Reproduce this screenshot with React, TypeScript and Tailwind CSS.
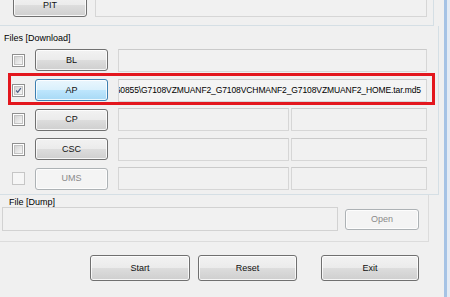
import React from 'react';

const btnBase =
  'flex items-center justify-center rounded-[3px] border shadow-[inset_0_0_0_1px_rgba(255,255,255,0.8)] leading-none';
const btnNormal =
  'border-[#707070] bg-[linear-gradient(to_bottom,#f2f2f2_0%,#ebebeb_50%,#dddddd_50%,#cfcfcf_100%)] text-[#111]';
const btnHot =
  'border-[#3c7fb1] bg-[linear-gradient(to_bottom,#eaf6fd_0%,#d9f0fc_50%,#bee6fd_50%,#a7d9f5_100%)] text-[#111]';
const btnOff = 'border-[#adb2b5] bg-[#f4f4f4] text-[#8a8a8a]';

const fieldCls = 'h-[23px] border border-[#d6d6d6] border-t-[#cacaca] bg-[#f1f1f1]';

const CheckBox = ({ checked, disabled }: { checked?: boolean; disabled?: boolean }) => (
  <div
    className={`ml-[12px] w-[13px] h-[13px] border flex items-center justify-center ${
      disabled ? 'border-[#c6c6c6] bg-[#f6f6f6]' : 'border-[#8f8f8f] bg-white'
    }`}
  >
    {!disabled && (
      <div className="w-[9px] h-[9px] border border-[#c3c3c3] bg-[linear-gradient(to_bottom_right,#d4d4d4,#f6f6f6)] flex items-center justify-center">
        {checked && (
          <svg width="9" height="9" viewBox="0 0 9 9">
            <path d="M1.5 4.5 L3.5 6.8 L7.5 1.5" fill="none" stroke="#4c5f86" strokeWidth="1.6" />
          </svg>
        )}
      </div>
    )}
  </div>
);

type RowProps = {
  label: string;
  h: string;
  checked?: boolean;
  hot?: boolean;
  disabled?: boolean;
  split?: boolean;
  value?: string;
};

const FileRow = ({ label, h, checked, hot, disabled, split, value }: RowProps) => (
  <div className={`flex items-center ${h}`}>
    <CheckBox checked={checked} disabled={disabled} />
    <div className={`${btnBase} ml-[10px] w-[73px] h-[22px] ${hot ? btnHot : disabled ? btnOff : btnNormal}`}>
      {label}
    </div>
    {split ? (
      <>
        <div className={`${fieldCls} ml-[10px] w-[171px]`} />
        <div className={`${fieldCls} ml-[2px] w-[136px]`} />
      </>
    ) : (
      <div
        className={`${fieldCls} ml-[10px] w-[309px] flex items-center justify-end overflow-hidden whitespace-nowrap pr-[5px] text-[8.5px] tracking-[-0.1px] ${
          value ? 'bg-[#f4f4f4] border-[#cfcfcf]' : ''
        }`}
      >
        {value}
      </div>
    )}
  </div>
);

export default function App() {
  return (
    <div className="relative w-[450px] h-[297px] overflow-hidden bg-[#f0f0f0] flex font-['Liberation_Sans',Arial,sans-serif] text-[9px] text-black">
      <div className="w-[444px] flex flex-col">
        {/* top group, mostly scrolled away */}
        <div className="h-[26px] w-[434px] shrink-0 border-r border-b border-[#d5dfe5] flex items-start">
          <div className={`${btnBase} ${btnNormal} -mt-[6px] ml-[13px] w-[74px] h-[23px]`}>PIT</div>
          <div className="-mt-[6px] ml-[8px] w-[332px] h-[23px] border border-[#d6d6d6] bg-[#f1f1f1]" />
        </div>

        {/* Files [Download] */}
        <div className="w-[439px] h-[169px] shrink-0 border-r border-b border-[#d5dfe5] flex flex-col">
          <div className="mt-[5px] pl-[4px] h-[14px] leading-[14px]">Files [Download]</div>
          <FileRow label="BL" h="h-[30px]" />
          <FileRow
            label="AP"
            h="h-[30px]"
            checked
            hot
            value="60855\G7108VZMUANF2_G7108VCHMANF2_G7108VZMUANF2_HOME.tar.md5"
          />
          <FileRow label="CP" h="h-[29px]" split />
          <FileRow label="CSC" h="h-[30px]" split />
          <FileRow label="UMS" h="h-[29px]" split disabled />
        </div>

        {/* File [Dump] */}
        <div className="w-[429px] h-[47px] shrink-0 border-r border-b border-[#dcdcdc] flex flex-col">
          <div className="pl-[9px] h-[12px] leading-[14px]">File [Dump]</div>
          <div className="flex items-center h-[24px]">
            <div className="ml-[2px] w-[336px] h-[24px] border border-[#d2d2d2] bg-[#f1f1f1]" />
            <div className={`${btnBase} ${btnOff} ml-[7px] w-[74px] h-[21px]`}>Open</div>
          </div>
        </div>

        <div className="mt-[13px] flex">
          <div className={`${btnBase} ${btnNormal} ml-[90px] w-[100px] h-[26px]`}>Start</div>
          <div className={`${btnBase} ${btnNormal} ml-[8px] w-[99px] h-[26px]`}>Reset</div>
          <div className={`${btnBase} ${btnNormal} ml-[24px] w-[98px] h-[26px]`}>Exit</div>
        </div>
      </div>

      {/* window frame */}
      <div className="w-[3px] bg-[#a6c3e5]" />
      <div className="w-[3px] bg-[#e4ebf4]" />

      {/* highlight annotation */}
      <div className="absolute left-[8px] top-[73px] w-[427px] h-[32px] border-[3px] border-[#e3161d] pointer-events-none" />
    </div>
  );
}
